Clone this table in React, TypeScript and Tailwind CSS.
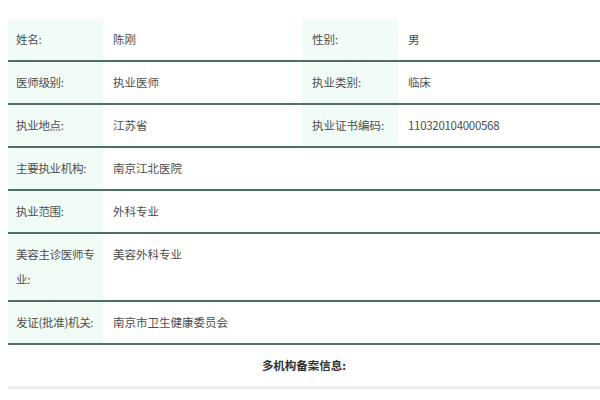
const rows: [string[], string, string?, string?][] = [
  [["姓名:"], "陈刚", "性别:", "男"],
  [["医师级别:"], "执业医师", "执业类别:", "临床"],
  [["执业地点:"], "江苏省", "执业证书编码:", "110320104000568"],
  [["主要执业机构:"], "南京江北医院"],
  [["执业范围:"], "外科专业"],
  [["美容主诊医师专", "业:"], "美容外科专业"],
  [["发证(批准)机关:"], "南京市卫生健康委员会"],
];

export default function App() {
  return (
    <div
      className="w-[600px] h-[400px] overflow-hidden bg-white pl-2 pt-[19px] text-[11.5px] text-[#4d4d4d]"
      style={{ fontFamily: '"Noto Sans CJK SC", "Noto Sans", sans-serif' }}
    >
      <div className="w-[620px]">
        {rows.map(([l1, v1, l2, v2], i) => (
          <div
            key={i}
            className="grid grid-cols-[95px_199px_96px_1fr] border-b-2 border-[#4f6f62] leading-[25px]"
          >
            <div className="bg-[#f2fcf7] py-2 pl-2 tracking-[-0.3px] whitespace-nowrap">
              {l1.map((line, j) => (
                <div key={j}>{line}</div>
              ))}
            </div>
            {l2 === undefined ? (
              <div className="col-span-3 py-2 pl-[10px]">{v1}</div>
            ) : (
              <>
                <div className="py-2 pl-[10px]">{v1}</div>
                <div className="bg-[#f2fcf7] py-2 pl-[10px]">{l2}</div>
                <div className="py-2 pl-[10px] tracking-[-0.3px]">{v2}</div>
              </>
            )}
          </div>
        ))}
        <div className="w-[592px] py-[8px] text-center font-bold leading-[25px] text-[#333]">
          多机构备案信息:
        </div>
        <div className="h-[3px] w-[592px] bg-[#efefef]" />
      </div>
    </div>
  );
}
